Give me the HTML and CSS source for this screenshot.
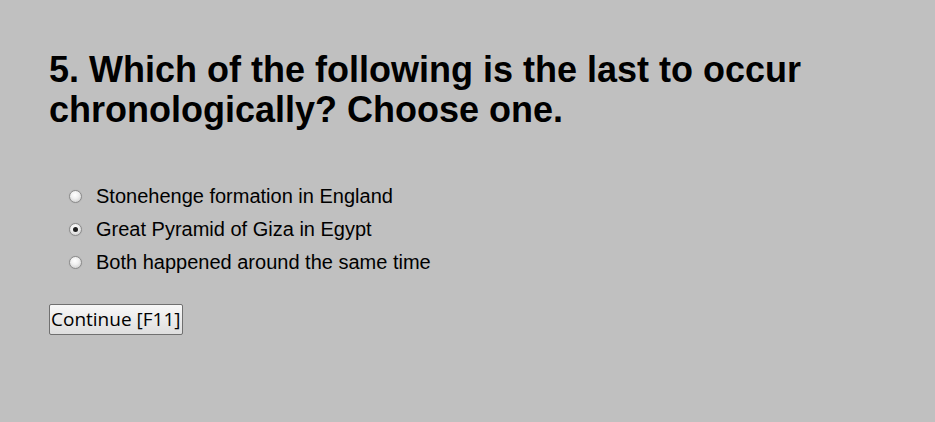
FILE: index.html
```html
<!DOCTYPE html>
<html>
<head>
<meta charset="utf-8">
<link rel="stylesheet" href="styles.css">
</head>
<body>
<main class="quiz">
  <h1 class="question">5. Which of the following is the last to occur chronologically? Choose one.</h1>
  <ul class="options">
    <li class="option"><span class="radio"></span><span class="label">Stonehenge formation in England</span></li>
    <li class="option"><span class="radio checked"></span><span class="label">Great Pyramid of Giza in Egypt</span></li>
    <li class="option"><span class="radio"></span><span class="label">Both happened around the same time</span></li>
  </ul>
  <button class="continue">Continue [F11]</button>
</main>
</body>
</html>
```
FILE: styles.css
```css
html, body {
  margin: 0;
  padding: 0;
  background: #c0c0c0;
}
.quiz {
  padding: 50px 0 0 49px;
  width: 830px;
}
.question {
  margin: 0;
  font-family: "Liberation Sans", Arial, sans-serif;
  font-weight: bold;
  font-size: 36px;
  line-height: 40px;
  color: #000;
}
.options {
  list-style: none;
  margin: 50px 0 0 0;
  padding: 0 0 0 20px;
}
.option {
  display: flex;
  align-items: center;
  height: 33px;
  font-family: "Liberation Sans", Arial, sans-serif;
  font-size: 20px;
  color: #000;
}
.radio {
  width: 11px;
  height: 11px;
  border-radius: 50%;
  border: 1px solid #8c8c8c;
  background: radial-gradient(circle at 45% 35%, #ffffff 0%, #f0f0f0 40%, #c4c4c4 100%);
  box-shadow: 0 0 1px rgba(0,0,0,0.2);
  margin-right: 14px;
  position: relative;
  flex: none;
}
.radio.checked::after {
  content: "";
  position: absolute;
  left: 3px;
  top: 3px;
  width: 5px;
  height: 5px;
  border-radius: 50%;
  background: #1e1e1e;
}
.continue {
  margin-top: 25px;
  font-family: "Open Sans", "Noto Sans", sans-serif;
  font-size: 19px;
  line-height: 25px;
  padding: 1px 1px;
  height: 31px;
  color: #000;
  background: linear-gradient(#f8f8f8, #dedede);
  border: 1px solid #707070;
  border-radius: 2px;
}
```
